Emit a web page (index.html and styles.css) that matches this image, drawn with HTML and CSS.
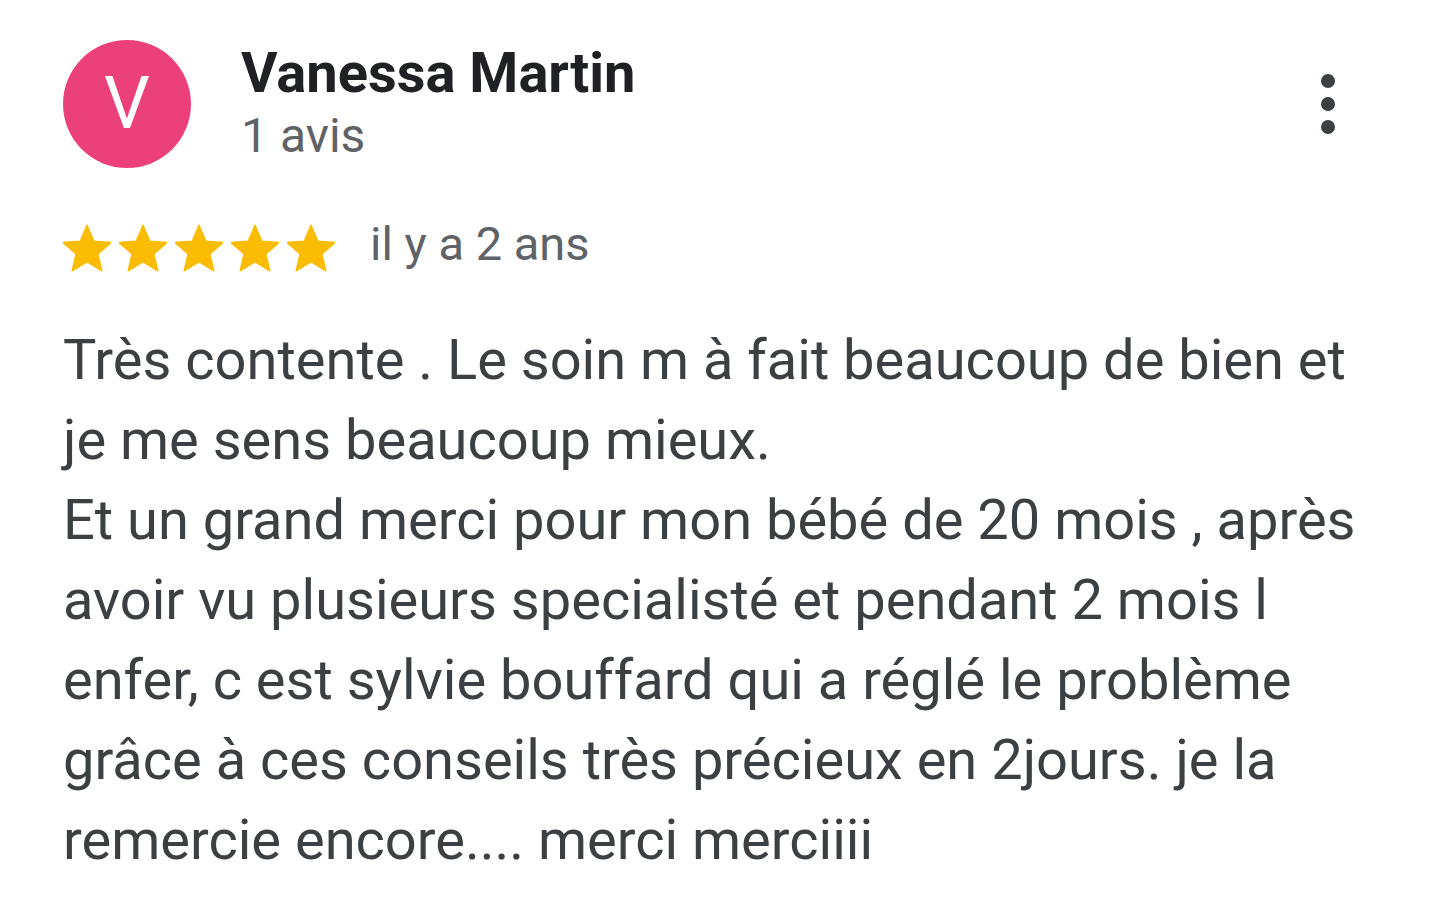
FILE: index.html
```html
<!DOCTYPE html>
<html lang="fr">
<head>
    <meta charset="UTF-8">
    <meta name="viewport" content="width=device-width, initial-scale=1.0">
    <title>Avis - Vanessa Martin</title>
    <link rel="stylesheet" href="styles.css">
</head>
<body>
    <div class="review">
        <div class="review-header">
            <div class="avatar">V</div>
            <div class="author">
                <div class="author-name">Vanessa Martin</div>
                <div class="author-count">1 avis</div>
            </div>
            <button class="more-btn" aria-label="Plus d'options">
                <svg width="16" height="62" viewBox="0 0 16 62">
                    <circle cx="8" cy="8" r="7"/>
                    <circle cx="8" cy="31" r="7"/>
                    <circle cx="8" cy="54" r="7"/>
                </svg>
            </button>
        </div>

        <div class="rating-row">
            <div class="stars">
                <svg class="star" viewBox="2 1.5 20 20"><path d="M12 17.27L18.18 21l-1.64-7.03L22 9.24l-7.19-.61L12 2 9.19 8.63 2 9.24l5.46 4.73L5.82 21z"/></svg>
                <svg class="star" viewBox="2 1.5 20 20"><path d="M12 17.27L18.18 21l-1.64-7.03L22 9.24l-7.19-.61L12 2 9.19 8.63 2 9.24l5.46 4.73L5.82 21z"/></svg>
                <svg class="star" viewBox="2 1.5 20 20"><path d="M12 17.27L18.18 21l-1.64-7.03L22 9.24l-7.19-.61L12 2 9.19 8.63 2 9.24l5.46 4.73L5.82 21z"/></svg>
                <svg class="star" viewBox="2 1.5 20 20"><path d="M12 17.27L18.18 21l-1.64-7.03L22 9.24l-7.19-.61L12 2 9.19 8.63 2 9.24l5.46 4.73L5.82 21z"/></svg>
                <svg class="star" viewBox="2 1.5 20 20"><path d="M12 17.27L18.18 21l-1.64-7.03L22 9.24l-7.19-.61L12 2 9.19 8.63 2 9.24l5.46 4.73L5.82 21z"/></svg>
            </div>
            <span class="review-date">il y a 2 ans</span>
        </div>

        <p class="review-text">Très contente . Le soin m à fait beaucoup de bien et je me sens beaucoup mieux.<br>Et un grand merci pour mon bébé de 20 mois , après avoir vu plusieurs specialisté et pendant 2 mois l enfer, c est sylvie bouffard qui a réglé le problème grâce à ces conseils très précieux en 2jours. je la remercie encore.... merci merciiii</p>
    </div>
</body>
</html>
```

FILE: styles.css
```css
body {
    margin: 0;
    background-color: #ffffff;
    font-family: Roboto, "Noto Sans", Arial, sans-serif;
}

.review {
    padding: 40px 60px 0 63px;
}

.review-header {
    display: flex;
    align-items: flex-start;
}

.avatar {
    width: 128px;
    height: 128px;
    flex-shrink: 0;
    border-radius: 50%;
    background-color: #ec407a;
    color: #ffffff;
    font-size: 72px;
    line-height: 128px;
    text-align: center;
}

.author {
    flex: 1;
    margin-left: 50px;
}

.author-name {
    font-size: 56px;
    font-weight: 700;
    line-height: 64px;
    color: #202124;
    margin-top: 1px;
}

.author-count {
    font-size: 48px;
    line-height: 56px;
    color: #5f6368;
    margin-top: 3px;
}

.more-btn {
    border: none;
    background: none;
    padding: 0;
    margin: 33px 44px 0 0;
    cursor: pointer;
}

.more-btn svg {
    display: block;
    fill: #3c4043;
}

.rating-row {
    display: flex;
    align-items: center;
    height: 56px;
    margin-top: 52px;
}

.stars {
    display: flex;
    gap: 8px;
}

.star {
    width: 48px;
    height: 48px;
    fill: #fbbc04;
    stroke: #fbbc04;
    stroke-width: 0.6;
    stroke-linejoin: round;
}

.review-date {
    margin-left: 35px;
    font-size: 47px;
    line-height: 56px;
    color: #5f6368;
    margin-top: -8px;
}

.review-text {
    margin: 44px 0 0;
    font-size: 56px;
    line-height: 80px;
    color: #3c4043;
}
```
